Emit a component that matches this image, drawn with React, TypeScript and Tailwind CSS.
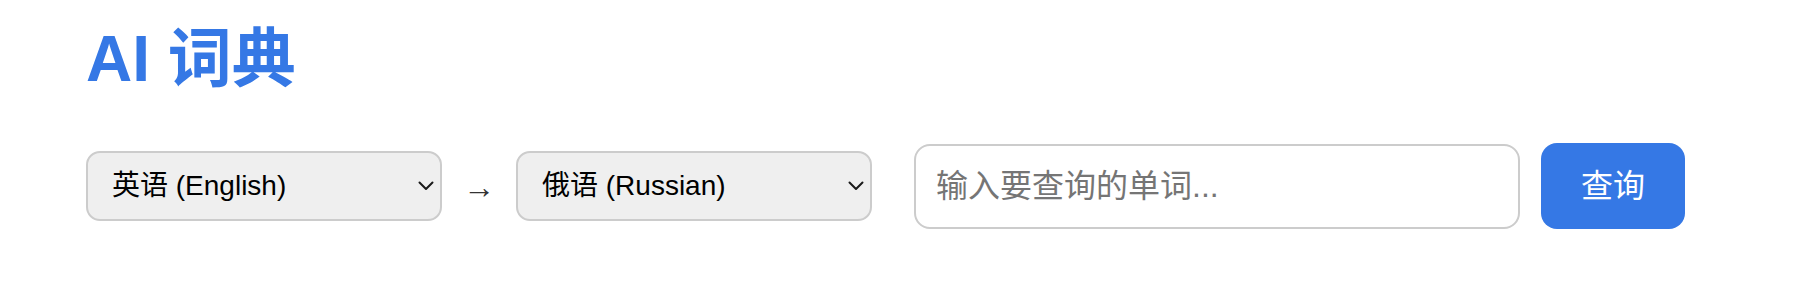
import { useState } from 'react';

const languages = [
  { value: 'en', label: '英语 (English)' },
  { value: 'ru', label: '俄语 (Russian)' },
  { value: 'zh', label: '中文 (Chinese)' },
  { value: 'ja', label: '日语 (Japanese)' },
];

function Chevron() {
  return (
    <svg
      className="pointer-events-none absolute right-[8px] top-1/2 -translate-y-1/2"
      width="16"
      height="10"
      viewBox="0 0 16 10"
      fill="none"
    >
      <path d="M1.5 1.5 L8 8 L14.5 1.5" stroke="#1a1a1a" strokeWidth="2" strokeLinecap="round" strokeLinejoin="round" />
    </svg>
  );
}

function LangSelect({ value, onChange }: { value: string; onChange: (v: string) => void }) {
  return (
    <div className="relative w-[356px] shrink-0">
      <select
        value={value}
        onChange={(e) => onChange(e.target.value)}
        className="h-[70px] w-full appearance-none rounded-[14px] border-2 border-[#cccccc] bg-[#efefef] pl-[24px] pr-[32px] text-[28px] text-black outline-none"
      >
        {languages.map((lang) => (
          <option key={lang.value} value={lang.value}>{lang.label}</option>
        ))}
      </select>
      <Chevron />
    </div>
  );
}

export default function App() {
  const [from, setFrom] = useState('en');
  const [to, setTo] = useState('ru');
  const [word, setWord] = useState('');

  return (
    <div className="min-h-[290px] bg-white pl-[86px] font-['Liberation_Sans','Noto_Sans_CJK_SC',sans-serif]">
      <h1 className="pt-[27px] text-[64px] font-bold leading-[64px] text-[#3578e5]">AI 词典</h1>
      <div className="mt-[52px] flex items-center">
        <LangSelect value={from} onChange={setFrom} />
        <span className="w-[74px] shrink-0 pt-[2px] text-center text-[32px] leading-none text-[#333333]">→</span>
        <LangSelect value={to} onChange={setTo} />
        <input
          value={word}
          onChange={(e) => setWord(e.target.value)}
          placeholder="输入要查询的单词..."
          className="ml-[42px] h-[85px] w-[606px] rounded-[16px] border-2 border-[#cccccc] bg-white px-[20px] text-[32px] text-black outline-none placeholder:text-[#757575]"
        />
        <button
          type="button"
          className="ml-[21px] h-[86px] w-[144px] rounded-[16px] bg-[#3578e5] text-[32px] text-white"
        >
          查询
        </button>
      </div>
    </div>
  );
}
